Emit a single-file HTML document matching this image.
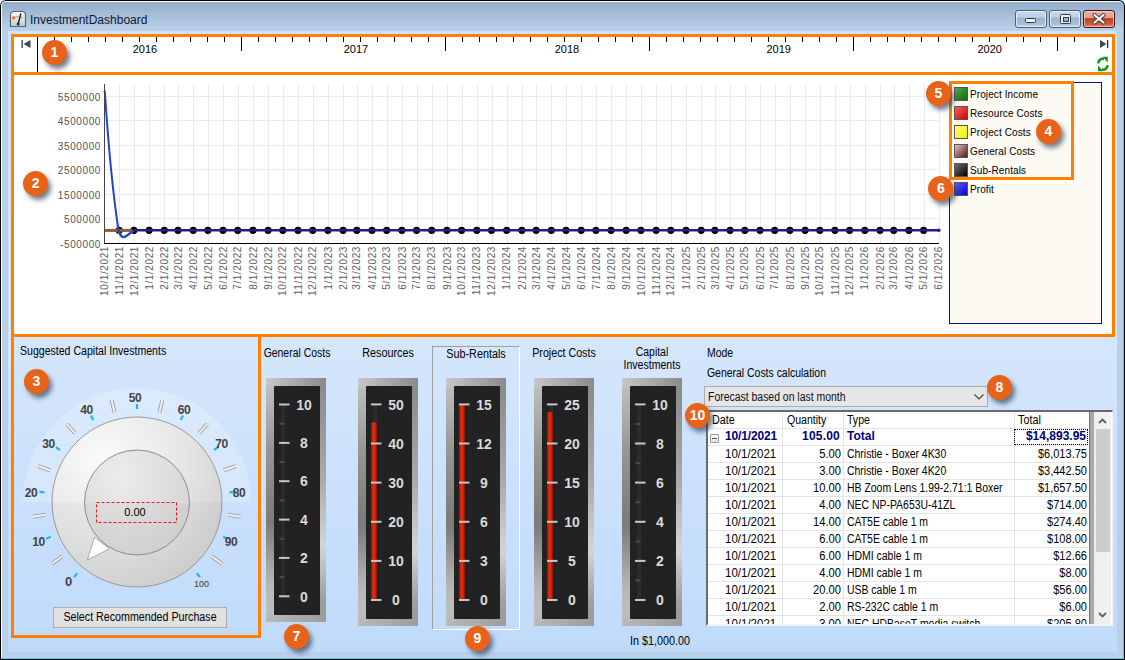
<!DOCTYPE html>
<html><head><meta charset="utf-8">
<style>
*{box-sizing:border-box}
html,body{margin:0;padding:0;width:1125px;height:660px;overflow:hidden;background:#fff;font-family:"Liberation Sans", sans-serif}
.a{position:absolute}
svg text{font-family:"Liberation Sans", sans-serif}
.badge{position:absolute;width:25px;height:25px;border-radius:50%;background:#e8621a;color:#fff;font:bold 14px "Liberation Sans", sans-serif;text-align:center;line-height:25px;box-shadow:3px 4px 5px rgba(40,55,80,0.65)}
.ui{font-size:11px;color:#000;white-space:nowrap}
.tr{font-size:12px;line-height:14px}
.gframe{background:linear-gradient(to right,#c8c8c8,#8a8a8a) top/100% 8px no-repeat,linear-gradient(to right,#bababa,#9c9c9c) bottom/100% 8px no-repeat,linear-gradient(#c4c4c4 0%,#959595 30%,#7a7a7a 59%,#b8b8b8 85%,#c0c0c0 100%) left/8px 100% no-repeat,linear-gradient(#888 0%,#a8a8a8 40%,#d4d4d4 69%,#a0a0a0 90%,#959595 100%) right/8px 100% no-repeat,#a0a0a0}
</style></head><body>
<div class="a" style="left:0;top:0;width:1125px;height:660px;background:#000;border-radius:6px 6px 0 0"></div>
<div class="a" style="left:1px;top:1px;width:1123px;height:658px;background:#3ad6f2;border-radius:5px 5px 0 0"></div>
<div class="a" style="left:1px;top:1px;width:1122px;height:657px;background:#fbfdff;border-radius:5px 5px 0 0"></div>
<div class="a" style="left:2px;top:2px;width:1121px;height:656px;background:#b9d0ea;border-radius:4px 4px 0 0;overflow:hidden">
  <div class="a" style="left:0;top:0;width:1121px;height:29px;background:linear-gradient(#92acca,#bcd2ea)"></div>
</div>
<div class="a" style="left:2px;top:657px;width:1121px;height:1px;background:#c8d0e8"></div>
<!-- client -->
<div class="a" style="left:8px;top:31px;width:1109px;height:621px;background:linear-gradient(#cfe3fb 0px,#d4e6fc 320px,#c0dafa 621px)"></div>
<!-- title -->
<div class="a ui" style="left:30px;top:13px;font-size:12px;color:#101830">InvestmentDashboard</div>
<!-- orange boxes -->
<div class="a" style="left:11px;top:34px;width:1104px;height:41px;border:3px solid #ff7f00;background:#fff"></div>
<div class="a" style="left:11px;top:72px;width:1104px;height:265px;border:3px solid #ff7f00;background:#fff"></div>
<div class="a" style="left:11px;top:334px;width:250px;height:304px;border:3px solid #ff7f00;border-top:none"></div>
<svg class="a" style="left:0;top:0" width="1125" height="660">
<line x1="37.5" y1="37" x2="37.5" y2="72" stroke="#000" stroke-width="1"/>
<line x1="54.5" y1="37" x2="54.5" y2="42" stroke="#000" stroke-width="1"/>
<line x1="71.5" y1="37" x2="71.5" y2="42" stroke="#000" stroke-width="1"/>
<line x1="88.5" y1="37" x2="88.5" y2="42" stroke="#000" stroke-width="1"/>
<line x1="105.5" y1="37" x2="105.5" y2="42" stroke="#000" stroke-width="1"/>
<line x1="122.5" y1="37" x2="122.5" y2="42" stroke="#000" stroke-width="1"/>
<line x1="139.5" y1="37" x2="139.5" y2="42" stroke="#000" stroke-width="1"/>
<line x1="156.5" y1="37" x2="156.5" y2="42" stroke="#000" stroke-width="1"/>
<line x1="173.5" y1="37" x2="173.5" y2="42" stroke="#000" stroke-width="1"/>
<line x1="190.5" y1="37" x2="190.5" y2="42" stroke="#000" stroke-width="1"/>
<line x1="207.5" y1="37" x2="207.5" y2="42" stroke="#000" stroke-width="1"/>
<line x1="224.5" y1="37" x2="224.5" y2="42" stroke="#000" stroke-width="1"/>
<line x1="241.5" y1="37" x2="241.5" y2="51" stroke="#000" stroke-width="1"/>
<line x1="258.5" y1="37" x2="258.5" y2="42" stroke="#000" stroke-width="1"/>
<line x1="275.5" y1="37" x2="275.5" y2="42" stroke="#000" stroke-width="1"/>
<line x1="292.5" y1="37" x2="292.5" y2="42" stroke="#000" stroke-width="1"/>
<line x1="309.5" y1="37" x2="309.5" y2="42" stroke="#000" stroke-width="1"/>
<line x1="326.5" y1="37" x2="326.5" y2="42" stroke="#000" stroke-width="1"/>
<line x1="343.5" y1="37" x2="343.5" y2="42" stroke="#000" stroke-width="1"/>
<line x1="360.5" y1="37" x2="360.5" y2="42" stroke="#000" stroke-width="1"/>
<line x1="377.5" y1="37" x2="377.5" y2="42" stroke="#000" stroke-width="1"/>
<line x1="394.5" y1="37" x2="394.5" y2="42" stroke="#000" stroke-width="1"/>
<line x1="411.5" y1="37" x2="411.5" y2="42" stroke="#000" stroke-width="1"/>
<line x1="428.5" y1="37" x2="428.5" y2="42" stroke="#000" stroke-width="1"/>
<line x1="445.5" y1="37" x2="445.5" y2="51" stroke="#000" stroke-width="1"/>
<line x1="462.5" y1="37" x2="462.5" y2="42" stroke="#000" stroke-width="1"/>
<line x1="479.5" y1="37" x2="479.5" y2="42" stroke="#000" stroke-width="1"/>
<line x1="496.5" y1="37" x2="496.5" y2="42" stroke="#000" stroke-width="1"/>
<line x1="513.5" y1="37" x2="513.5" y2="42" stroke="#000" stroke-width="1"/>
<line x1="530.5" y1="37" x2="530.5" y2="42" stroke="#000" stroke-width="1"/>
<line x1="547.5" y1="37" x2="547.5" y2="42" stroke="#000" stroke-width="1"/>
<line x1="564.5" y1="37" x2="564.5" y2="42" stroke="#000" stroke-width="1"/>
<line x1="581.5" y1="37" x2="581.5" y2="42" stroke="#000" stroke-width="1"/>
<line x1="598.5" y1="37" x2="598.5" y2="42" stroke="#000" stroke-width="1"/>
<line x1="615.5" y1="37" x2="615.5" y2="42" stroke="#000" stroke-width="1"/>
<line x1="632.5" y1="37" x2="632.5" y2="42" stroke="#000" stroke-width="1"/>
<line x1="649.5" y1="37" x2="649.5" y2="51" stroke="#000" stroke-width="1"/>
<line x1="666.5" y1="37" x2="666.5" y2="42" stroke="#000" stroke-width="1"/>
<line x1="683.5" y1="37" x2="683.5" y2="42" stroke="#000" stroke-width="1"/>
<line x1="700.5" y1="37" x2="700.5" y2="42" stroke="#000" stroke-width="1"/>
<line x1="717.5" y1="37" x2="717.5" y2="42" stroke="#000" stroke-width="1"/>
<line x1="734.5" y1="37" x2="734.5" y2="42" stroke="#000" stroke-width="1"/>
<line x1="751.5" y1="37" x2="751.5" y2="42" stroke="#000" stroke-width="1"/>
<line x1="768.5" y1="37" x2="768.5" y2="42" stroke="#000" stroke-width="1"/>
<line x1="785.5" y1="37" x2="785.5" y2="42" stroke="#000" stroke-width="1"/>
<line x1="802.5" y1="37" x2="802.5" y2="42" stroke="#000" stroke-width="1"/>
<line x1="819.5" y1="37" x2="819.5" y2="42" stroke="#000" stroke-width="1"/>
<line x1="836.5" y1="37" x2="836.5" y2="42" stroke="#000" stroke-width="1"/>
<line x1="853.5" y1="37" x2="853.5" y2="51" stroke="#000" stroke-width="1"/>
<line x1="870.5" y1="37" x2="870.5" y2="42" stroke="#000" stroke-width="1"/>
<line x1="887.5" y1="37" x2="887.5" y2="42" stroke="#000" stroke-width="1"/>
<line x1="904.5" y1="37" x2="904.5" y2="42" stroke="#000" stroke-width="1"/>
<line x1="921.5" y1="37" x2="921.5" y2="42" stroke="#000" stroke-width="1"/>
<line x1="938.5" y1="37" x2="938.5" y2="42" stroke="#000" stroke-width="1"/>
<line x1="955.5" y1="37" x2="955.5" y2="42" stroke="#000" stroke-width="1"/>
<line x1="972.5" y1="37" x2="972.5" y2="42" stroke="#000" stroke-width="1"/>
<line x1="989.5" y1="37" x2="989.5" y2="42" stroke="#000" stroke-width="1"/>
<line x1="1006.5" y1="37" x2="1006.5" y2="42" stroke="#000" stroke-width="1"/>
<line x1="1023.5" y1="37" x2="1023.5" y2="42" stroke="#000" stroke-width="1"/>
<line x1="1040.5" y1="37" x2="1040.5" y2="42" stroke="#000" stroke-width="1"/>
<line x1="1057.5" y1="37" x2="1057.5" y2="51" stroke="#000" stroke-width="1"/>
<line x1="1074.5" y1="37" x2="1074.5" y2="42" stroke="#000" stroke-width="1"/>
<text x="145" y="53" text-anchor="middle" font-size="11" fill="#000">2016</text>
<text x="356" y="53" text-anchor="middle" font-size="11" fill="#000">2017</text>
<text x="567" y="53" text-anchor="middle" font-size="11" fill="#000">2018</text>
<text x="778.7" y="53" text-anchor="middle" font-size="11" fill="#000">2019</text>
<text x="989.7" y="53" text-anchor="middle" font-size="11" fill="#000">2020</text>
<line x1="104" y1="96.5" x2="939" y2="96.5" stroke="#ebebeb" stroke-width="1"/>
<line x1="104" y1="120.5" x2="939" y2="120.5" stroke="#ebebeb" stroke-width="1"/>
<line x1="104" y1="145.5" x2="939" y2="145.5" stroke="#ebebeb" stroke-width="1"/>
<line x1="104" y1="169.5" x2="939" y2="169.5" stroke="#ebebeb" stroke-width="1"/>
<line x1="104" y1="194.5" x2="939" y2="194.5" stroke="#ebebeb" stroke-width="1"/>
<line x1="104" y1="218.5" x2="939" y2="218.5" stroke="#ebebeb" stroke-width="1"/>
<line x1="119.5" y1="84" x2="119.5" y2="243" stroke="#ebebeb" stroke-width="1"/>
<line x1="134.5" y1="84" x2="134.5" y2="243" stroke="#ebebeb" stroke-width="1"/>
<line x1="149.5" y1="84" x2="149.5" y2="243" stroke="#ebebeb" stroke-width="1"/>
<line x1="164.5" y1="84" x2="164.5" y2="243" stroke="#ebebeb" stroke-width="1"/>
<line x1="178.5" y1="84" x2="178.5" y2="243" stroke="#ebebeb" stroke-width="1"/>
<line x1="193.5" y1="84" x2="193.5" y2="243" stroke="#ebebeb" stroke-width="1"/>
<line x1="208.5" y1="84" x2="208.5" y2="243" stroke="#ebebeb" stroke-width="1"/>
<line x1="223.5" y1="84" x2="223.5" y2="243" stroke="#ebebeb" stroke-width="1"/>
<line x1="238.5" y1="84" x2="238.5" y2="243" stroke="#ebebeb" stroke-width="1"/>
<line x1="253.5" y1="84" x2="253.5" y2="243" stroke="#ebebeb" stroke-width="1"/>
<line x1="268.5" y1="84" x2="268.5" y2="243" stroke="#ebebeb" stroke-width="1"/>
<line x1="283.5" y1="84" x2="283.5" y2="243" stroke="#ebebeb" stroke-width="1"/>
<line x1="298.5" y1="84" x2="298.5" y2="243" stroke="#ebebeb" stroke-width="1"/>
<line x1="313.5" y1="84" x2="313.5" y2="243" stroke="#ebebeb" stroke-width="1"/>
<line x1="328.5" y1="84" x2="328.5" y2="243" stroke="#ebebeb" stroke-width="1"/>
<line x1="343.5" y1="84" x2="343.5" y2="243" stroke="#ebebeb" stroke-width="1"/>
<line x1="357.5" y1="84" x2="357.5" y2="243" stroke="#ebebeb" stroke-width="1"/>
<line x1="372.5" y1="84" x2="372.5" y2="243" stroke="#ebebeb" stroke-width="1"/>
<line x1="387.5" y1="84" x2="387.5" y2="243" stroke="#ebebeb" stroke-width="1"/>
<line x1="402.5" y1="84" x2="402.5" y2="243" stroke="#ebebeb" stroke-width="1"/>
<line x1="417.5" y1="84" x2="417.5" y2="243" stroke="#ebebeb" stroke-width="1"/>
<line x1="432.5" y1="84" x2="432.5" y2="243" stroke="#ebebeb" stroke-width="1"/>
<line x1="447.5" y1="84" x2="447.5" y2="243" stroke="#ebebeb" stroke-width="1"/>
<line x1="462.5" y1="84" x2="462.5" y2="243" stroke="#ebebeb" stroke-width="1"/>
<line x1="477.5" y1="84" x2="477.5" y2="243" stroke="#ebebeb" stroke-width="1"/>
<line x1="492.5" y1="84" x2="492.5" y2="243" stroke="#ebebeb" stroke-width="1"/>
<line x1="507.5" y1="84" x2="507.5" y2="243" stroke="#ebebeb" stroke-width="1"/>
<line x1="522.5" y1="84" x2="522.5" y2="243" stroke="#ebebeb" stroke-width="1"/>
<line x1="536.5" y1="84" x2="536.5" y2="243" stroke="#ebebeb" stroke-width="1"/>
<line x1="551.5" y1="84" x2="551.5" y2="243" stroke="#ebebeb" stroke-width="1"/>
<line x1="566.5" y1="84" x2="566.5" y2="243" stroke="#ebebeb" stroke-width="1"/>
<line x1="581.5" y1="84" x2="581.5" y2="243" stroke="#ebebeb" stroke-width="1"/>
<line x1="596.5" y1="84" x2="596.5" y2="243" stroke="#ebebeb" stroke-width="1"/>
<line x1="611.5" y1="84" x2="611.5" y2="243" stroke="#ebebeb" stroke-width="1"/>
<line x1="626.5" y1="84" x2="626.5" y2="243" stroke="#ebebeb" stroke-width="1"/>
<line x1="641.5" y1="84" x2="641.5" y2="243" stroke="#ebebeb" stroke-width="1"/>
<line x1="656.5" y1="84" x2="656.5" y2="243" stroke="#ebebeb" stroke-width="1"/>
<line x1="671.5" y1="84" x2="671.5" y2="243" stroke="#ebebeb" stroke-width="1"/>
<line x1="686.5" y1="84" x2="686.5" y2="243" stroke="#ebebeb" stroke-width="1"/>
<line x1="701.5" y1="84" x2="701.5" y2="243" stroke="#ebebeb" stroke-width="1"/>
<line x1="715.5" y1="84" x2="715.5" y2="243" stroke="#ebebeb" stroke-width="1"/>
<line x1="730.5" y1="84" x2="730.5" y2="243" stroke="#ebebeb" stroke-width="1"/>
<line x1="745.5" y1="84" x2="745.5" y2="243" stroke="#ebebeb" stroke-width="1"/>
<line x1="760.5" y1="84" x2="760.5" y2="243" stroke="#ebebeb" stroke-width="1"/>
<line x1="775.5" y1="84" x2="775.5" y2="243" stroke="#ebebeb" stroke-width="1"/>
<line x1="790.5" y1="84" x2="790.5" y2="243" stroke="#ebebeb" stroke-width="1"/>
<line x1="805.5" y1="84" x2="805.5" y2="243" stroke="#ebebeb" stroke-width="1"/>
<line x1="820.5" y1="84" x2="820.5" y2="243" stroke="#ebebeb" stroke-width="1"/>
<line x1="835.5" y1="84" x2="835.5" y2="243" stroke="#ebebeb" stroke-width="1"/>
<line x1="850.5" y1="84" x2="850.5" y2="243" stroke="#ebebeb" stroke-width="1"/>
<line x1="865.5" y1="84" x2="865.5" y2="243" stroke="#ebebeb" stroke-width="1"/>
<line x1="880.5" y1="84" x2="880.5" y2="243" stroke="#ebebeb" stroke-width="1"/>
<line x1="894.5" y1="84" x2="894.5" y2="243" stroke="#ebebeb" stroke-width="1"/>
<line x1="909.5" y1="84" x2="909.5" y2="243" stroke="#ebebeb" stroke-width="1"/>
<line x1="924.5" y1="84" x2="924.5" y2="243" stroke="#ebebeb" stroke-width="1"/>
<line x1="939.5" y1="84" x2="939.5" y2="243" stroke="#ebebeb" stroke-width="1"/>
<text x="101" y="100.6" text-anchor="end" font-size="10" letter-spacing="0.6" fill="#555">5500000</text>
<text x="101" y="124.6" text-anchor="end" font-size="10" letter-spacing="0.6" fill="#555">4500000</text>
<text x="101" y="149.6" text-anchor="end" font-size="10" letter-spacing="0.6" fill="#555">3500000</text>
<text x="101" y="173.6" text-anchor="end" font-size="10" letter-spacing="0.6" fill="#555">2500000</text>
<text x="101" y="198.6" text-anchor="end" font-size="10" letter-spacing="0.6" fill="#555">1500000</text>
<text x="101" y="222.6" text-anchor="end" font-size="10" letter-spacing="0.6" fill="#555">500000</text>
<text x="101" y="247.6" text-anchor="end" font-size="10" letter-spacing="0.6" fill="#555">-500000</text>
<text transform="translate(107.6,246) rotate(-90)" text-anchor="end" font-size="10" letter-spacing="0.6" fill="#606060">10/1/2021</text>
<text transform="translate(122.8,246) rotate(-90)" text-anchor="end" font-size="10" letter-spacing="0.6" fill="#606060">11/1/2021</text>
<text transform="translate(137.5,246) rotate(-90)" text-anchor="end" font-size="10" letter-spacing="0.6" fill="#606060">12/1/2021</text>
<text transform="translate(152.7,246) rotate(-90)" text-anchor="end" font-size="10" letter-spacing="0.6" fill="#606060">1/1/2022</text>
<text transform="translate(167.9,246) rotate(-90)" text-anchor="end" font-size="10" letter-spacing="0.6" fill="#606060">2/1/2022</text>
<text transform="translate(181.6,246) rotate(-90)" text-anchor="end" font-size="10" letter-spacing="0.6" fill="#606060">3/1/2022</text>
<text transform="translate(196.8,246) rotate(-90)" text-anchor="end" font-size="10" letter-spacing="0.6" fill="#606060">4/1/2022</text>
<text transform="translate(211.5,246) rotate(-90)" text-anchor="end" font-size="10" letter-spacing="0.6" fill="#606060">5/1/2022</text>
<text transform="translate(226.6,246) rotate(-90)" text-anchor="end" font-size="10" letter-spacing="0.6" fill="#606060">6/1/2022</text>
<text transform="translate(241.3,246) rotate(-90)" text-anchor="end" font-size="10" letter-spacing="0.6" fill="#606060">7/1/2022</text>
<text transform="translate(256.5,246) rotate(-90)" text-anchor="end" font-size="10" letter-spacing="0.6" fill="#606060">8/1/2022</text>
<text transform="translate(271.7,246) rotate(-90)" text-anchor="end" font-size="10" letter-spacing="0.6" fill="#606060">9/1/2022</text>
<text transform="translate(286.4,246) rotate(-90)" text-anchor="end" font-size="10" letter-spacing="0.6" fill="#606060">10/1/2022</text>
<text transform="translate(301.6,246) rotate(-90)" text-anchor="end" font-size="10" letter-spacing="0.6" fill="#606060">11/1/2022</text>
<text transform="translate(316.3,246) rotate(-90)" text-anchor="end" font-size="10" letter-spacing="0.6" fill="#606060">12/1/2022</text>
<text transform="translate(331.5,246) rotate(-90)" text-anchor="end" font-size="10" letter-spacing="0.6" fill="#606060">1/1/2023</text>
<text transform="translate(346.7,246) rotate(-90)" text-anchor="end" font-size="10" letter-spacing="0.6" fill="#606060">2/1/2023</text>
<text transform="translate(360.4,246) rotate(-90)" text-anchor="end" font-size="10" letter-spacing="0.6" fill="#606060">3/1/2023</text>
<text transform="translate(375.6,246) rotate(-90)" text-anchor="end" font-size="10" letter-spacing="0.6" fill="#606060">4/1/2023</text>
<text transform="translate(390.3,246) rotate(-90)" text-anchor="end" font-size="10" letter-spacing="0.6" fill="#606060">5/1/2023</text>
<text transform="translate(405.5,246) rotate(-90)" text-anchor="end" font-size="10" letter-spacing="0.6" fill="#606060">6/1/2023</text>
<text transform="translate(420.2,246) rotate(-90)" text-anchor="end" font-size="10" letter-spacing="0.6" fill="#606060">7/1/2023</text>
<text transform="translate(435.3,246) rotate(-90)" text-anchor="end" font-size="10" letter-spacing="0.6" fill="#606060">8/1/2023</text>
<text transform="translate(450.5,246) rotate(-90)" text-anchor="end" font-size="10" letter-spacing="0.6" fill="#606060">9/1/2023</text>
<text transform="translate(465.2,246) rotate(-90)" text-anchor="end" font-size="10" letter-spacing="0.6" fill="#606060">10/1/2023</text>
<text transform="translate(480.4,246) rotate(-90)" text-anchor="end" font-size="10" letter-spacing="0.6" fill="#606060">11/1/2023</text>
<text transform="translate(495.1,246) rotate(-90)" text-anchor="end" font-size="10" letter-spacing="0.6" fill="#606060">12/1/2023</text>
<text transform="translate(510.3,246) rotate(-90)" text-anchor="end" font-size="10" letter-spacing="0.6" fill="#606060">1/1/2024</text>
<text transform="translate(525.5,246) rotate(-90)" text-anchor="end" font-size="10" letter-spacing="0.6" fill="#606060">2/1/2024</text>
<text transform="translate(539.7,246) rotate(-90)" text-anchor="end" font-size="10" letter-spacing="0.6" fill="#606060">3/1/2024</text>
<text transform="translate(554.9,246) rotate(-90)" text-anchor="end" font-size="10" letter-spacing="0.6" fill="#606060">4/1/2024</text>
<text transform="translate(569.6,246) rotate(-90)" text-anchor="end" font-size="10" letter-spacing="0.6" fill="#606060">5/1/2024</text>
<text transform="translate(584.8,246) rotate(-90)" text-anchor="end" font-size="10" letter-spacing="0.6" fill="#606060">6/1/2024</text>
<text transform="translate(599.5,246) rotate(-90)" text-anchor="end" font-size="10" letter-spacing="0.6" fill="#606060">7/1/2024</text>
<text transform="translate(614.7,246) rotate(-90)" text-anchor="end" font-size="10" letter-spacing="0.6" fill="#606060">8/1/2024</text>
<text transform="translate(629.8,246) rotate(-90)" text-anchor="end" font-size="10" letter-spacing="0.6" fill="#606060">9/1/2024</text>
<text transform="translate(644.5,246) rotate(-90)" text-anchor="end" font-size="10" letter-spacing="0.6" fill="#606060">10/1/2024</text>
<text transform="translate(659.7,246) rotate(-90)" text-anchor="end" font-size="10" letter-spacing="0.6" fill="#606060">11/1/2024</text>
<text transform="translate(674.4,246) rotate(-90)" text-anchor="end" font-size="10" letter-spacing="0.6" fill="#606060">12/1/2024</text>
<text transform="translate(689.6,246) rotate(-90)" text-anchor="end" font-size="10" letter-spacing="0.6" fill="#606060">1/1/2025</text>
<text transform="translate(704.8,246) rotate(-90)" text-anchor="end" font-size="10" letter-spacing="0.6" fill="#606060">2/1/2025</text>
<text transform="translate(718.5,246) rotate(-90)" text-anchor="end" font-size="10" letter-spacing="0.6" fill="#606060">3/1/2025</text>
<text transform="translate(733.7,246) rotate(-90)" text-anchor="end" font-size="10" letter-spacing="0.6" fill="#606060">4/1/2025</text>
<text transform="translate(748.4,246) rotate(-90)" text-anchor="end" font-size="10" letter-spacing="0.6" fill="#606060">5/1/2025</text>
<text transform="translate(763.6,246) rotate(-90)" text-anchor="end" font-size="10" letter-spacing="0.6" fill="#606060">6/1/2025</text>
<text transform="translate(778.3,246) rotate(-90)" text-anchor="end" font-size="10" letter-spacing="0.6" fill="#606060">7/1/2025</text>
<text transform="translate(793.5,246) rotate(-90)" text-anchor="end" font-size="10" letter-spacing="0.6" fill="#606060">8/1/2025</text>
<text transform="translate(808.7,246) rotate(-90)" text-anchor="end" font-size="10" letter-spacing="0.6" fill="#606060">9/1/2025</text>
<text transform="translate(823.4,246) rotate(-90)" text-anchor="end" font-size="10" letter-spacing="0.6" fill="#606060">10/1/2025</text>
<text transform="translate(838.5,246) rotate(-90)" text-anchor="end" font-size="10" letter-spacing="0.6" fill="#606060">11/1/2025</text>
<text transform="translate(853.2,246) rotate(-90)" text-anchor="end" font-size="10" letter-spacing="0.6" fill="#606060">12/1/2025</text>
<text transform="translate(868.4,246) rotate(-90)" text-anchor="end" font-size="10" letter-spacing="0.6" fill="#606060">1/1/2026</text>
<text transform="translate(883.6,246) rotate(-90)" text-anchor="end" font-size="10" letter-spacing="0.6" fill="#606060">2/1/2026</text>
<text transform="translate(897.3,246) rotate(-90)" text-anchor="end" font-size="10" letter-spacing="0.6" fill="#606060">3/1/2026</text>
<text transform="translate(912.5,246) rotate(-90)" text-anchor="end" font-size="10" letter-spacing="0.6" fill="#606060">4/1/2026</text>
<text transform="translate(927.2,246) rotate(-90)" text-anchor="end" font-size="10" letter-spacing="0.6" fill="#606060">5/1/2026</text>
<text transform="translate(942.4,246) rotate(-90)" text-anchor="end" font-size="10" letter-spacing="0.6" fill="#606060">6/1/2026</text>
<circle cx="119.2" cy="230.3" r="3.6" fill="#000"/>
<circle cx="133.9" cy="230.3" r="3.6" fill="#000"/>
<circle cx="149.1" cy="230.3" r="3.6" fill="#000"/>
<circle cx="164.3" cy="230.3" r="3.6" fill="#000"/>
<circle cx="178.0" cy="230.3" r="3.6" fill="#000"/>
<circle cx="193.2" cy="230.3" r="3.6" fill="#000"/>
<circle cx="207.9" cy="230.3" r="3.6" fill="#000"/>
<circle cx="223.0" cy="230.3" r="3.6" fill="#000"/>
<circle cx="237.7" cy="230.3" r="3.6" fill="#000"/>
<circle cx="252.9" cy="230.3" r="3.6" fill="#000"/>
<circle cx="268.1" cy="230.3" r="3.6" fill="#000"/>
<circle cx="282.8" cy="230.3" r="3.6" fill="#000"/>
<circle cx="298.0" cy="230.3" r="3.6" fill="#000"/>
<circle cx="312.7" cy="230.3" r="3.6" fill="#000"/>
<circle cx="327.9" cy="230.3" r="3.6" fill="#000"/>
<circle cx="343.1" cy="230.3" r="3.6" fill="#000"/>
<circle cx="356.8" cy="230.3" r="3.6" fill="#000"/>
<circle cx="372.0" cy="230.3" r="3.6" fill="#000"/>
<circle cx="386.7" cy="230.3" r="3.6" fill="#000"/>
<circle cx="401.9" cy="230.3" r="3.6" fill="#000"/>
<circle cx="416.6" cy="230.3" r="3.6" fill="#000"/>
<circle cx="431.7" cy="230.3" r="3.6" fill="#000"/>
<circle cx="446.9" cy="230.3" r="3.6" fill="#000"/>
<circle cx="461.6" cy="230.3" r="3.6" fill="#000"/>
<circle cx="476.8" cy="230.3" r="3.6" fill="#000"/>
<circle cx="491.5" cy="230.3" r="3.6" fill="#000"/>
<circle cx="506.7" cy="230.3" r="3.6" fill="#000"/>
<circle cx="521.9" cy="230.3" r="3.6" fill="#000"/>
<circle cx="536.1" cy="230.3" r="3.6" fill="#000"/>
<circle cx="551.3" cy="230.3" r="3.6" fill="#000"/>
<circle cx="566.0" cy="230.3" r="3.6" fill="#000"/>
<circle cx="581.2" cy="230.3" r="3.6" fill="#000"/>
<circle cx="595.9" cy="230.3" r="3.6" fill="#000"/>
<circle cx="611.1" cy="230.3" r="3.6" fill="#000"/>
<circle cx="626.2" cy="230.3" r="3.6" fill="#000"/>
<circle cx="640.9" cy="230.3" r="3.6" fill="#000"/>
<circle cx="656.1" cy="230.3" r="3.6" fill="#000"/>
<circle cx="670.8" cy="230.3" r="3.6" fill="#000"/>
<circle cx="686.0" cy="230.3" r="3.6" fill="#000"/>
<circle cx="701.2" cy="230.3" r="3.6" fill="#000"/>
<circle cx="714.9" cy="230.3" r="3.6" fill="#000"/>
<circle cx="730.1" cy="230.3" r="3.6" fill="#000"/>
<circle cx="744.8" cy="230.3" r="3.6" fill="#000"/>
<circle cx="760.0" cy="230.3" r="3.6" fill="#000"/>
<circle cx="774.7" cy="230.3" r="3.6" fill="#000"/>
<circle cx="789.9" cy="230.3" r="3.6" fill="#000"/>
<circle cx="805.1" cy="230.3" r="3.6" fill="#000"/>
<circle cx="819.8" cy="230.3" r="3.6" fill="#000"/>
<circle cx="834.9" cy="230.3" r="3.6" fill="#000"/>
<circle cx="849.6" cy="230.3" r="3.6" fill="#000"/>
<circle cx="864.8" cy="230.3" r="3.6" fill="#000"/>
<circle cx="880.0" cy="230.3" r="3.6" fill="#000"/>
<circle cx="893.7" cy="230.3" r="3.6" fill="#000"/>
<circle cx="908.9" cy="230.3" r="3.6" fill="#000"/>
<circle cx="923.6" cy="230.3" r="3.6" fill="#000"/>
<polyline points="104.0,230.3 938.8,230.3" stroke="#241c8a" stroke-width="2.4" fill="none"/>
<line x1="104" y1="230.3" x2="132" y2="230.3" stroke="#9a5a2c" stroke-width="2.8"/>
<path d="M118.5,232 C120.5,237 123,238.5 126,236.5 C129,234.5 131,232 133.3,231" stroke="#3aa040" stroke-width="2" fill="none"/>
<path d="M104.8,91 C108,140 114,200 118,227 C119.5,235 122,237.5 124.5,236.8 C128,235.5 130.5,232.5 133.3,230.8" stroke="#1f44d0" stroke-width="2" fill="none"/>
<circle cx="104.8" cy="91.5" r="1.2" fill="#3a9a3a"/>
<circle cx="938.8" cy="230.3" r="1.8" fill="#241c8a"/>
<line x1="104.5" y1="84" x2="104.5" y2="243" stroke="#444" stroke-width="1"/>
<line x1="104" y1="243.5" x2="939" y2="243.5" stroke="#000" stroke-width="1"/>
</svg>
<!-- legend -->
<div class="a" style="left:949px;top:82px;width:153px;height:242px;background:#fdfaf3;border:1px solid #10107a"></div>
<div class="a" style="left:949px;top:81px;width:125px;height:99px;border:3px solid #ff7f00"></div>

<div class="a" style="left:954px;top:87px;width:14px;height:14px;background:linear-gradient(135deg,#4db04d,#116611);border:1px solid #555"></div>
<div class="a ui" style="left:970px;top:88px;font-size:10px;line-height:14px;letter-spacing:0.1px">Project Income</div>
<div class="a" style="left:954px;top:106px;width:14px;height:14px;background:linear-gradient(135deg,#ff6060,#cc0000);border:1px solid #555"></div>
<div class="a ui" style="left:970px;top:107px;font-size:10px;line-height:14px;letter-spacing:0.1px">Resource Costs</div>
<div class="a" style="left:954px;top:125px;width:14px;height:14px;background:linear-gradient(135deg,#ffff80,#f0f000);border:1px solid #555"></div>
<div class="a ui" style="left:970px;top:126px;font-size:10px;line-height:14px;letter-spacing:0.1px">Project Costs</div>
<div class="a" style="left:954px;top:144px;width:14px;height:14px;background:linear-gradient(135deg,#e8c0c8,#501820);border:1px solid #555"></div>
<div class="a ui" style="left:970px;top:145px;font-size:10px;line-height:14px;letter-spacing:0.1px">General Costs</div>
<div class="a" style="left:954px;top:163px;width:14px;height:14px;background:linear-gradient(135deg,#707070,#000);border:1px solid #555"></div>
<div class="a ui" style="left:970px;top:164px;font-size:10px;line-height:14px;letter-spacing:0.1px">Sub-Rentals</div>
<div class="a" style="left:954px;top:182px;width:14px;height:14px;background:linear-gradient(135deg,#6060ff,#0000cc);border:1px solid #555"></div>
<div class="a ui" style="left:970px;top:183px;font-size:10px;line-height:14px;letter-spacing:0.1px">Profit</div>
<svg class="a" style="left:0;top:0" width="1125" height="660"><defs><radialGradient id="knob" cx="30%" cy="25%" r="85%"><stop offset="0" stop-color="#fbfbfb"/><stop offset="0.55" stop-color="#e6e6e6"/><stop offset="1" stop-color="#cfcfcf"/></radialGradient><radialGradient id="knob2" cx="35%" cy="25%" r="85%"><stop offset="0" stop-color="#ececec"/><stop offset="1" stop-color="#d2d2d2"/></radialGradient><linearGradient id="shade" x1="0" y1="0" x2="0" y2="1"><stop offset="0" stop-color="#000" stop-opacity="0"/><stop offset="0.5" stop-color="#000" stop-opacity="0"/><stop offset="0.5" stop-color="#000" stop-opacity="0.03"/><stop offset="1" stop-color="#000" stop-opacity="0.02"/></linearGradient></defs><path d="M23.0,502.0 A114,114 0 0 1 251.0,502.0 Z" fill="#ffffff" fill-opacity="0.22"/><line x1="62.2" y1="556.4" x2="52.1" y2="563.7" stroke="#979797" stroke-width="3.8" stroke-linecap="butt"/><line x1="62.2" y1="556.4" x2="52.1" y2="563.7" stroke="#ededed" stroke-width="2.2" stroke-linecap="butt"/><line x1="45.4" y1="514.9" x2="33.0" y2="516.6" stroke="#979797" stroke-width="3.8" stroke-linecap="butt"/><line x1="45.4" y1="514.9" x2="33.0" y2="516.6" stroke="#ededed" stroke-width="2.2" stroke-linecap="butt"/><line x1="50.1" y1="470.4" x2="38.3" y2="466.1" stroke="#979797" stroke-width="3.8" stroke-linecap="butt"/><line x1="50.1" y1="470.4" x2="38.3" y2="466.1" stroke="#ededed" stroke-width="2.2" stroke-linecap="butt"/><line x1="75.1" y1="433.3" x2="66.7" y2="424.0" stroke="#979797" stroke-width="3.8" stroke-linecap="butt"/><line x1="75.1" y1="433.3" x2="66.7" y2="424.0" stroke="#ededed" stroke-width="2.2" stroke-linecap="butt"/><line x1="114.6" y1="412.2" x2="111.6" y2="400.1" stroke="#979797" stroke-width="3.8" stroke-linecap="butt"/><line x1="114.6" y1="412.2" x2="111.6" y2="400.1" stroke="#ededed" stroke-width="2.2" stroke-linecap="butt"/><line x1="159.4" y1="412.2" x2="162.4" y2="400.1" stroke="#979797" stroke-width="3.8" stroke-linecap="butt"/><line x1="159.4" y1="412.2" x2="162.4" y2="400.1" stroke="#ededed" stroke-width="2.2" stroke-linecap="butt"/><line x1="198.9" y1="433.3" x2="207.3" y2="424.0" stroke="#979797" stroke-width="3.8" stroke-linecap="butt"/><line x1="198.9" y1="433.3" x2="207.3" y2="424.0" stroke="#ededed" stroke-width="2.2" stroke-linecap="butt"/><line x1="223.9" y1="470.4" x2="235.7" y2="466.1" stroke="#979797" stroke-width="3.8" stroke-linecap="butt"/><line x1="223.9" y1="470.4" x2="235.7" y2="466.1" stroke="#ededed" stroke-width="2.2" stroke-linecap="butt"/><line x1="228.6" y1="514.9" x2="241.0" y2="516.6" stroke="#979797" stroke-width="3.8" stroke-linecap="butt"/><line x1="228.6" y1="514.9" x2="241.0" y2="516.6" stroke="#ededed" stroke-width="2.2" stroke-linecap="butt"/><line x1="211.8" y1="556.4" x2="221.9" y2="563.7" stroke="#979797" stroke-width="3.8" stroke-linecap="butt"/><line x1="211.8" y1="556.4" x2="221.9" y2="563.7" stroke="#ededed" stroke-width="2.2" stroke-linecap="butt"/><line x1="77.2" y1="573.2" x2="74.0" y2="577.1" stroke="#1ab8f0" stroke-width="2.2"/><line x1="50.8" y1="536.8" x2="46.1" y2="538.7" stroke="#1ab8f0" stroke-width="2.2"/><line x1="44.5" y1="492.3" x2="39.5" y2="491.8" stroke="#1ab8f0" stroke-width="2.2"/><line x1="59.9" y1="450.0" x2="55.8" y2="447.2" stroke="#1ab8f0" stroke-width="2.2"/><line x1="93.3" y1="419.9" x2="91.0" y2="415.5" stroke="#1ab8f0" stroke-width="2.2"/><line x1="137.0" y1="409.0" x2="137.0" y2="404.0" stroke="#1ab8f0" stroke-width="2.2"/><line x1="180.7" y1="419.9" x2="183.0" y2="415.5" stroke="#1ab8f0" stroke-width="2.2"/><line x1="214.1" y1="450.0" x2="218.2" y2="447.2" stroke="#1ab8f0" stroke-width="2.2"/><line x1="229.5" y1="492.3" x2="234.5" y2="491.8" stroke="#1ab8f0" stroke-width="2.2"/><line x1="223.2" y1="536.8" x2="227.9" y2="538.7" stroke="#1ab8f0" stroke-width="2.2"/><line x1="196.8" y1="573.2" x2="200.0" y2="577.1" stroke="#1ab8f0" stroke-width="2.2"/><text x="68.5" y="585.9" text-anchor="middle" font-size="13" font-weight="bold" fill="#444" letter-spacing="-0.3">0</text><text x="38.5" y="545.9" text-anchor="middle" font-size="12" font-weight="bold" fill="#444" letter-spacing="-0.3">10</text><text x="31" y="496.9" text-anchor="middle" font-size="12" font-weight="bold" fill="#444" letter-spacing="-0.3">20</text><text x="48.5" y="448.4" text-anchor="middle" font-size="12" font-weight="bold" fill="#444" letter-spacing="-0.3">30</text><text x="86.5" y="414.4" text-anchor="middle" font-size="12" font-weight="bold" fill="#444" letter-spacing="-0.3">40</text><text x="135" y="401.9" text-anchor="middle" font-size="12" font-weight="bold" fill="#444" letter-spacing="-0.3">50</text><text x="184" y="414.4" text-anchor="middle" font-size="12" font-weight="bold" fill="#444" letter-spacing="-0.3">60</text><text x="221.5" y="448.4" text-anchor="middle" font-size="12" font-weight="bold" fill="#444" letter-spacing="-0.3">70</text><text x="239" y="496.9" text-anchor="middle" font-size="12" font-weight="bold" fill="#444" letter-spacing="-0.3">80</text><text x="231" y="545.9" text-anchor="middle" font-size="12" font-weight="bold" fill="#444" letter-spacing="-0.3">90</text><text x="201.5" y="587.0" text-anchor="middle" font-size="9" fill="#404040">100</text><circle cx="137.0" cy="502.0" r="85" fill="url(#knob)" stroke="#9a9a9a" stroke-width="1"/><circle cx="137.0" cy="502.0" r="85" fill="url(#shade)"/><circle cx="137.0" cy="502.5" r="52.5" fill="url(#knob2)" stroke="#8e8e8e" stroke-width="1"/><circle cx="137.0" cy="502.5" r="52.5" fill="url(#shade)"/><path d="M87.3,560 L94.5,537.3 L109.5,548.7 Z" fill="#fff" stroke="#9a9a9a" stroke-width="0.8"/><rect x="96.5" y="502.5" width="80" height="20" fill="none" stroke="#ff1010" stroke-width="1" stroke-dasharray="3,2"/><text x="135" y="516" text-anchor="middle" font-size="11" fill="#000">0.00</text></svg>
<div class="a ui tr" style="left:19.5px;top:344.4px;transform:scaleX(0.88);transform-origin:0 0">Suggested Capital Investments</div>
<div class="a" style="left:53px;top:607px;width:174px;height:21px;background:#e1e1e1;border:1px solid #adadad"></div>
<div class="a ui tr" style="left:40px;top:609.6px;width:200px;text-align:center;transform:scaleX(0.89)">Select Recommended Purchase</div>
<div class="a gframe" style="left:266px;top:378px;width:60px;height:244px"></div>
<div class="a" style="left:273.5px;top:385.5px;width:46px;height:229.5px;background:#222;border-radius:1px"></div>
<svg class="a" style="left:0;top:0" width="1125" height="660"><rect x="281" y="404.5" width="4" height="191.79999999999995" fill="#2c2c2c"/><rect x="279.5" y="576.1" width="5" height="2" fill="#4a4a4a" /><rect x="279.5" y="537.8" width="5" height="2" fill="#4a4a4a" /><rect x="279.5" y="499.4" width="5" height="2" fill="#4a4a4a" /><rect x="279.5" y="461.0" width="5" height="2" fill="#4a4a4a" /><rect x="279.5" y="422.7" width="5" height="2" fill="#4a4a4a" /><rect x="279" y="595.3" width="10.5" height="2" fill="#c8c8c8"/><text x="304" y="601.5" text-anchor="middle" font-size="14" font-weight="bold" fill="#dadada">0</text><rect x="279" y="556.9" width="10.5" height="2" fill="#c8c8c8"/><text x="304" y="563.1" text-anchor="middle" font-size="14" font-weight="bold" fill="#dadada">2</text><rect x="279" y="518.6" width="10.5" height="2" fill="#c8c8c8"/><text x="304" y="524.8" text-anchor="middle" font-size="14" font-weight="bold" fill="#dadada">4</text><rect x="279" y="480.2" width="10.5" height="2" fill="#c8c8c8"/><text x="304" y="486.4" text-anchor="middle" font-size="14" font-weight="bold" fill="#dadada">6</text><rect x="279" y="441.9" width="10.5" height="2" fill="#c8c8c8"/><text x="304" y="448.1" text-anchor="middle" font-size="14" font-weight="bold" fill="#dadada">8</text><rect x="279" y="403.5" width="10.5" height="2" fill="#c8c8c8"/><text x="304" y="409.7" text-anchor="middle" font-size="14" font-weight="bold" fill="#dadada">10</text></svg>
<div class="a gframe" style="left:358px;top:378px;width:60px;height:248px"></div>
<div class="a" style="left:365.5px;top:385.5px;width:46px;height:233.5px;background:#222;border-radius:1px"></div>
<svg class="a" style="left:0;top:0" width="1125" height="660"><rect x="373" y="404.4" width="4" height="195.60000000000002" fill="#2c2c2c"/><rect x="371.5" y="579.4" width="5" height="2" fill="#4a4a4a" /><rect x="371.5" y="540.3" width="5" height="2" fill="#4a4a4a" /><rect x="371.5" y="501.2" width="5" height="2" fill="#4a4a4a" /><rect x="371.5" y="462.1" width="5" height="2" fill="#4a4a4a" /><rect x="371.5" y="423.0" width="5" height="2" fill="#4a4a4a" /><rect x="371.2" y="422.4" width="5.6" height="177.6" fill="url(#redbar)"/><rect x="371" y="599.0" width="10.5" height="2" fill="#c8c8c8"/><text x="396" y="605.2" text-anchor="middle" font-size="14" font-weight="bold" fill="#dadada">0</text><rect x="371" y="559.9" width="10.5" height="2" fill="#c8c8c8"/><text x="396" y="566.1" text-anchor="middle" font-size="14" font-weight="bold" fill="#dadada">10</text><rect x="371" y="520.8" width="10.5" height="2" fill="#c8c8c8"/><text x="396" y="527.0" text-anchor="middle" font-size="14" font-weight="bold" fill="#dadada">20</text><rect x="371" y="481.6" width="10.5" height="2" fill="#c8c8c8"/><text x="396" y="487.8" text-anchor="middle" font-size="14" font-weight="bold" fill="#dadada">30</text><rect x="371" y="442.5" width="10.5" height="2" fill="#c8c8c8"/><text x="396" y="448.7" text-anchor="middle" font-size="14" font-weight="bold" fill="#dadada">40</text><rect x="371" y="403.4" width="10.5" height="2" fill="#c8c8c8"/><text x="396" y="409.6" text-anchor="middle" font-size="14" font-weight="bold" fill="#dadada">50</text></svg>
<div class="a gframe" style="left:446px;top:378px;width:60px;height:248px"></div>
<div class="a" style="left:453.5px;top:385.5px;width:46px;height:233.5px;background:#222;border-radius:1px"></div>
<svg class="a" style="left:0;top:0" width="1125" height="660"><rect x="461" y="404.4" width="4" height="195.60000000000002" fill="#2c2c2c"/><rect x="459.5" y="579.4" width="5" height="2" fill="#4a4a4a" /><rect x="459.5" y="540.3" width="5" height="2" fill="#4a4a4a" /><rect x="459.5" y="501.2" width="5" height="2" fill="#4a4a4a" /><rect x="459.5" y="462.1" width="5" height="2" fill="#4a4a4a" /><rect x="459.5" y="423.0" width="5" height="2" fill="#4a4a4a" /><rect x="459.2" y="404.4" width="5.6" height="195.6" fill="url(#redbar)"/><rect x="459" y="599.0" width="10.5" height="2" fill="#c8c8c8"/><text x="484" y="605.2" text-anchor="middle" font-size="14" font-weight="bold" fill="#dadada">0</text><rect x="459" y="559.9" width="10.5" height="2" fill="#c8c8c8"/><text x="484" y="566.1" text-anchor="middle" font-size="14" font-weight="bold" fill="#dadada">3</text><rect x="459" y="520.8" width="10.5" height="2" fill="#c8c8c8"/><text x="484" y="527.0" text-anchor="middle" font-size="14" font-weight="bold" fill="#dadada">6</text><rect x="459" y="481.6" width="10.5" height="2" fill="#c8c8c8"/><text x="484" y="487.8" text-anchor="middle" font-size="14" font-weight="bold" fill="#dadada">9</text><rect x="459" y="442.5" width="10.5" height="2" fill="#c8c8c8"/><text x="484" y="448.7" text-anchor="middle" font-size="14" font-weight="bold" fill="#dadada">12</text><rect x="459" y="403.4" width="10.5" height="2" fill="#c8c8c8"/><text x="484" y="409.6" text-anchor="middle" font-size="14" font-weight="bold" fill="#dadada">15</text></svg>
<div class="a gframe" style="left:534px;top:378px;width:60px;height:248px"></div>
<div class="a" style="left:541.5px;top:385.5px;width:46px;height:233.5px;background:#222;border-radius:1px"></div>
<svg class="a" style="left:0;top:0" width="1125" height="660"><rect x="549" y="404.4" width="4" height="195.60000000000002" fill="#2c2c2c"/><rect x="547.5" y="579.4" width="5" height="2" fill="#4a4a4a" /><rect x="547.5" y="540.3" width="5" height="2" fill="#4a4a4a" /><rect x="547.5" y="501.2" width="5" height="2" fill="#4a4a4a" /><rect x="547.5" y="462.1" width="5" height="2" fill="#4a4a4a" /><rect x="547.5" y="423.0" width="5" height="2" fill="#4a4a4a" /><rect x="547.2" y="412.2" width="5.6" height="187.8" fill="url(#redbar)"/><rect x="547" y="599.0" width="10.5" height="2" fill="#c8c8c8"/><text x="572" y="605.2" text-anchor="middle" font-size="14" font-weight="bold" fill="#dadada">0</text><rect x="547" y="559.9" width="10.5" height="2" fill="#c8c8c8"/><text x="572" y="566.1" text-anchor="middle" font-size="14" font-weight="bold" fill="#dadada">5</text><rect x="547" y="520.8" width="10.5" height="2" fill="#c8c8c8"/><text x="572" y="527.0" text-anchor="middle" font-size="14" font-weight="bold" fill="#dadada">10</text><rect x="547" y="481.6" width="10.5" height="2" fill="#c8c8c8"/><text x="572" y="487.8" text-anchor="middle" font-size="14" font-weight="bold" fill="#dadada">15</text><rect x="547" y="442.5" width="10.5" height="2" fill="#c8c8c8"/><text x="572" y="448.7" text-anchor="middle" font-size="14" font-weight="bold" fill="#dadada">20</text><rect x="547" y="403.4" width="10.5" height="2" fill="#c8c8c8"/><text x="572" y="409.6" text-anchor="middle" font-size="14" font-weight="bold" fill="#dadada">25</text></svg>
<div class="a gframe" style="left:622px;top:378px;width:60px;height:248px"></div>
<div class="a" style="left:629.5px;top:385.5px;width:46px;height:233.5px;background:#222;border-radius:1px"></div>
<svg class="a" style="left:0;top:0" width="1125" height="660"><rect x="637" y="404.4" width="4" height="195.60000000000002" fill="#2c2c2c"/><rect x="635.5" y="579.4" width="5" height="2" fill="#4a4a4a" /><rect x="635.5" y="540.3" width="5" height="2" fill="#4a4a4a" /><rect x="635.5" y="501.2" width="5" height="2" fill="#4a4a4a" /><rect x="635.5" y="462.1" width="5" height="2" fill="#4a4a4a" /><rect x="635.5" y="423.0" width="5" height="2" fill="#4a4a4a" /><rect x="635" y="599.0" width="10.5" height="2" fill="#c8c8c8"/><text x="660" y="605.2" text-anchor="middle" font-size="14" font-weight="bold" fill="#dadada">0</text><rect x="635" y="559.9" width="10.5" height="2" fill="#c8c8c8"/><text x="660" y="566.1" text-anchor="middle" font-size="14" font-weight="bold" fill="#dadada">2</text><rect x="635" y="520.8" width="10.5" height="2" fill="#c8c8c8"/><text x="660" y="527.0" text-anchor="middle" font-size="14" font-weight="bold" fill="#dadada">4</text><rect x="635" y="481.6" width="10.5" height="2" fill="#c8c8c8"/><text x="660" y="487.8" text-anchor="middle" font-size="14" font-weight="bold" fill="#dadada">6</text><rect x="635" y="442.5" width="10.5" height="2" fill="#c8c8c8"/><text x="660" y="448.7" text-anchor="middle" font-size="14" font-weight="bold" fill="#dadada">8</text><rect x="635" y="403.4" width="10.5" height="2" fill="#c8c8c8"/><text x="660" y="409.6" text-anchor="middle" font-size="14" font-weight="bold" fill="#dadada">10</text></svg>
<svg class="a" style="left:0;top:0" width="0" height="0"><defs><linearGradient id="redbar" x1="0" x2="1"><stop offset="0" stop-color="#b81800"/><stop offset="0.5" stop-color="#e83010"/><stop offset="1" stop-color="#a01000"/></linearGradient></defs></svg>
<div class="a" style="left:432px;top:346px;width:88px;height:284px;border:1px solid #a0a0a0;border-right-color:#fff;border-bottom-color:#fff"></div>
<div class="a ui tr" style="left:236.5px;top:345.6px;width:120px;text-align:center;transform:scaleX(0.87)">General Costs</div>
<div class="a ui tr" style="left:328px;top:346.0px;width:120px;text-align:center;transform:scaleX(0.9)">Resources</div>
<div class="a ui tr" style="left:416.4px;top:347.40000000000003px;width:120px;text-align:center;transform:scaleX(0.9)">Sub-Rentals</div>
<div class="a ui tr" style="left:504.4px;top:346.40000000000003px;width:120px;text-align:center;transform:scaleX(0.89)">Project Costs</div>
<div class="a ui tr" style="left:592.4px;top:345.3px;width:120px;text-align:center;transform:scaleX(0.87)">Capital</div>
<div class="a ui tr" style="left:591.7px;top:358.40000000000003px;width:120px;text-align:center;transform:scaleX(0.88)">Investments</div>
<div class="a ui tr" style="left:600.3px;top:634.3000000000001px;width:120px;text-align:center;transform:scaleX(0.9)">In $1,000.00</div>
<div class="a ui tr" style="left:707px;top:345.8px;transform:scaleX(0.87);transform-origin:0 0">Mode</div>
<div class="a ui tr" style="left:707px;top:365.8px;transform:scaleX(0.87);transform-origin:0 0">General Costs calculation</div>
<div class="a" style="left:704px;top:386px;width:284px;height:21px;background:#e6e6e6;border:1px solid #acacac"></div>
<div class="a ui tr" style="left:708px;top:389.6px;transform:scaleX(0.87);transform-origin:0 0;color:#101020">Forecast based on last month</div>
<svg class="a" style="left:973px;top:393px" width="12" height="8"><path d="M1.5,1.5 L6,6 L10.5,1.5" stroke="#444" stroke-width="1.2" fill="none"/></svg>
<div class="a" style="left:706px;top:410px;width:407px;height:216px;background:#fff;border-top:2px solid #6a6a6a;border-left:2px solid #6a6a6a;border-right:1px solid #f4f4f4;border-bottom:2px solid #f4f4f4"></div>
<div class="a" style="left:0;top:0;width:1125px;height:624px;overflow:hidden;clip-path:inset(412px 0 0 0)"><div class="a" style="left:782px;top:412px;width:1px;height:212px;background:#e4e4e4"></div><div class="a" style="left:843px;top:412px;width:1px;height:212px;background:#e4e4e4"></div><div class="a" style="left:1014px;top:412px;width:1px;height:212px;background:#e4e4e4"></div><div class="a" style="left:708px;top:428px;width:381px;height:1px;background:#e4e4e4"></div><div class="a" style="left:708px;top:445px;width:381px;height:1px;background:#e4e4e4"></div><div class="a" style="left:708px;top:462px;width:381px;height:1px;background:#e4e4e4"></div><div class="a" style="left:708px;top:479px;width:381px;height:1px;background:#e4e4e4"></div><div class="a" style="left:708px;top:496px;width:381px;height:1px;background:#e4e4e4"></div><div class="a" style="left:708px;top:513px;width:381px;height:1px;background:#e4e4e4"></div><div class="a" style="left:708px;top:530px;width:381px;height:1px;background:#e4e4e4"></div><div class="a" style="left:708px;top:547px;width:381px;height:1px;background:#e4e4e4"></div><div class="a" style="left:708px;top:564px;width:381px;height:1px;background:#e4e4e4"></div><div class="a" style="left:708px;top:581px;width:381px;height:1px;background:#e4e4e4"></div><div class="a" style="left:708px;top:598px;width:381px;height:1px;background:#e4e4e4"></div><div class="a" style="left:708px;top:615px;width:381px;height:1px;background:#e4e4e4"></div><div class="a ui tr" style="left:711.5px;top:412.7px;transform:scaleX(0.9);transform-origin:0 0">Date</div><div class="a ui tr" style="left:786.5px;top:412.7px;transform:scaleX(0.88);transform-origin:0 0">Quantity</div><div class="a ui tr" style="left:847px;top:412.7px;transform:scaleX(0.88);transform-origin:0 0">Type</div><div class="a ui tr" style="left:1018px;top:412.7px;transform:scaleX(0.9);transform-origin:0 0">Total</div><div class="a" style="left:710px;top:433.5px;width:9px;height:9px;border:1px solid #9a9a9a;background:linear-gradient(#fff,#e0e0e0);border-radius:1px"></div><div class="a" style="left:712px;top:437.5px;width:5px;height:1px;background:#3050a0"></div><div class="a ui" style="left:725px;top:430px;line-height:13px;font-size:12px;font-weight:bold;color:#00007a;letter-spacing:-0.15px">10/1/2021</div><div class="a ui" style="left:743px;top:430px;width:97px;text-align:right;line-height:13px;font-size:12px;font-weight:bold;color:#00007a;letter-spacing:0.2px">105.00</div><div class="a ui" style="left:847px;top:430px;line-height:13px;font-size:12px;font-weight:bold;color:#00007a">Total</div><div class="a" style="left:1014px;top:429px;width:74px;height:16px;border:1px dotted #000"></div><div class="a ui" style="left:985px;top:430px;width:101px;text-align:right;line-height:13px;font-size:12px;font-weight:bold;color:#00007a">$14,893.95</div><div class="a ui tr" style="left:725px;top:446.5px;transform:scaleX(0.96);transform-origin:0 0">10/1/2021</div><div class="a ui tr" style="left:741px;top:446.5px;width:100px;text-align:right;transform:scaleX(0.93);transform-origin:100% 0">5.00</div><div class="a ui tr" style="left:847px;top:446.5px;transform:scaleX(0.87);transform-origin:0 0">Christie - Boxer 4K30</div><div class="a ui tr" style="left:986px;top:446.5px;width:101px;text-align:right;transform:scaleX(0.92);transform-origin:100% 0">$6,013.75</div><div class="a ui tr" style="left:725px;top:463.5px;transform:scaleX(0.96);transform-origin:0 0">10/1/2021</div><div class="a ui tr" style="left:741px;top:463.5px;width:100px;text-align:right;transform:scaleX(0.93);transform-origin:100% 0">3.00</div><div class="a ui tr" style="left:847px;top:463.5px;transform:scaleX(0.87);transform-origin:0 0">Christie - Boxer 4K20</div><div class="a ui tr" style="left:986px;top:463.5px;width:101px;text-align:right;transform:scaleX(0.92);transform-origin:100% 0">$3,442.50</div><div class="a ui tr" style="left:725px;top:480.5px;transform:scaleX(0.96);transform-origin:0 0">10/1/2021</div><div class="a ui tr" style="left:741px;top:480.5px;width:100px;text-align:right;transform:scaleX(0.93);transform-origin:100% 0">10.00</div><div class="a ui tr" style="left:847px;top:480.5px;transform:scaleX(0.87);transform-origin:0 0">HB Zoom Lens 1.99-2.71:1 Boxer</div><div class="a ui tr" style="left:986px;top:480.5px;width:101px;text-align:right;transform:scaleX(0.92);transform-origin:100% 0">$1,657.50</div><div class="a ui tr" style="left:725px;top:497.5px;transform:scaleX(0.96);transform-origin:0 0">10/1/2021</div><div class="a ui tr" style="left:741px;top:497.5px;width:100px;text-align:right;transform:scaleX(0.93);transform-origin:100% 0">4.00</div><div class="a ui tr" style="left:847px;top:497.5px;transform:scaleX(0.87);transform-origin:0 0">NEC NP-PA653U-41ZL</div><div class="a ui tr" style="left:986px;top:497.5px;width:101px;text-align:right;transform:scaleX(0.92);transform-origin:100% 0">$714.00</div><div class="a ui tr" style="left:725px;top:514.5px;transform:scaleX(0.96);transform-origin:0 0">10/1/2021</div><div class="a ui tr" style="left:741px;top:514.5px;width:100px;text-align:right;transform:scaleX(0.93);transform-origin:100% 0">14.00</div><div class="a ui tr" style="left:847px;top:514.5px;transform:scaleX(0.87);transform-origin:0 0">CAT5E cable 1 m</div><div class="a ui tr" style="left:986px;top:514.5px;width:101px;text-align:right;transform:scaleX(0.92);transform-origin:100% 0">$274.40</div><div class="a ui tr" style="left:725px;top:531.5px;transform:scaleX(0.96);transform-origin:0 0">10/1/2021</div><div class="a ui tr" style="left:741px;top:531.5px;width:100px;text-align:right;transform:scaleX(0.93);transform-origin:100% 0">6.00</div><div class="a ui tr" style="left:847px;top:531.5px;transform:scaleX(0.87);transform-origin:0 0">CAT5E cable 1 m</div><div class="a ui tr" style="left:986px;top:531.5px;width:101px;text-align:right;transform:scaleX(0.92);transform-origin:100% 0">$108.00</div><div class="a ui tr" style="left:725px;top:548.5px;transform:scaleX(0.96);transform-origin:0 0">10/1/2021</div><div class="a ui tr" style="left:741px;top:548.5px;width:100px;text-align:right;transform:scaleX(0.93);transform-origin:100% 0">6.00</div><div class="a ui tr" style="left:847px;top:548.5px;transform:scaleX(0.87);transform-origin:0 0">HDMI cable 1 m</div><div class="a ui tr" style="left:986px;top:548.5px;width:101px;text-align:right;transform:scaleX(0.92);transform-origin:100% 0">$12.66</div><div class="a ui tr" style="left:725px;top:565.5px;transform:scaleX(0.96);transform-origin:0 0">10/1/2021</div><div class="a ui tr" style="left:741px;top:565.5px;width:100px;text-align:right;transform:scaleX(0.93);transform-origin:100% 0">4.00</div><div class="a ui tr" style="left:847px;top:565.5px;transform:scaleX(0.87);transform-origin:0 0">HDMI cable 1 m</div><div class="a ui tr" style="left:986px;top:565.5px;width:101px;text-align:right;transform:scaleX(0.92);transform-origin:100% 0">$8.00</div><div class="a ui tr" style="left:725px;top:582.5px;transform:scaleX(0.96);transform-origin:0 0">10/1/2021</div><div class="a ui tr" style="left:741px;top:582.5px;width:100px;text-align:right;transform:scaleX(0.93);transform-origin:100% 0">20.00</div><div class="a ui tr" style="left:847px;top:582.5px;transform:scaleX(0.87);transform-origin:0 0">USB cable 1 m</div><div class="a ui tr" style="left:986px;top:582.5px;width:101px;text-align:right;transform:scaleX(0.92);transform-origin:100% 0">$56.00</div><div class="a ui tr" style="left:725px;top:599.5px;transform:scaleX(0.96);transform-origin:0 0">10/1/2021</div><div class="a ui tr" style="left:741px;top:599.5px;width:100px;text-align:right;transform:scaleX(0.93);transform-origin:100% 0">2.00</div><div class="a ui tr" style="left:847px;top:599.5px;transform:scaleX(0.87);transform-origin:0 0">RS-232C cable 1 m</div><div class="a ui tr" style="left:986px;top:599.5px;width:101px;text-align:right;transform:scaleX(0.92);transform-origin:100% 0">$6.00</div><div class="a ui tr" style="left:725px;top:616.5px;transform:scaleX(0.96);transform-origin:0 0">10/1/2021</div><div class="a ui tr" style="left:741px;top:616.5px;width:100px;text-align:right;transform:scaleX(0.93);transform-origin:100% 0">3.00</div><div class="a ui tr" style="left:847px;top:616.5px;transform:scaleX(0.87);transform-origin:0 0">NEC HDBaseT media switch</div><div class="a ui tr" style="left:986px;top:616.5px;width:101px;text-align:right;transform:scaleX(0.92);transform-origin:100% 0">$205.80</div></div>
<div class="a" style="left:1089px;top:412px;width:1px;height:212px;background:#6e6e6e"></div>
<div class="a" style="left:1090px;top:412px;width:3.5px;height:212px;background:#a9a9a9"></div>
<div class="a" style="left:1093.5px;top:412px;width:17.5px;height:212px;background:#f0f0f0"></div>
<div class="a" style="left:1095.5px;top:429px;width:14.5px;height:123px;background:#cdcdcd"></div>
<svg class="a" style="left:1097px;top:417px" width="12" height="8"><path d="M2,6 L5.5,2.5 L9,6" stroke="#606060" stroke-width="1.8" fill="none"/></svg>
<svg class="a" style="left:1097px;top:611px" width="12" height="8"><path d="M2,2 L5.5,5.5 L9,2" stroke="#606060" stroke-width="1.8" fill="none"/></svg>
<svg class="a" style="left:9px;top:10px" width="19" height="18">
<defs><linearGradient id="icg" x1="0" y1="0" x2="0" y2="1"><stop offset="0" stop-color="#ffffff"/><stop offset="1" stop-color="#c8c8c8"/></linearGradient></defs>
<path d="M1.5,16.5 L1.5,5 Q1.5,2 5,1.5 L13,1.5 Q16.5,2 16.5,5 L16.5,16.5 Z" fill="url(#icg)" stroke="#52657a" stroke-width="1.2"/>
<path d="M4,8 Q9,5 14,8" stroke="#b8b8b8" stroke-width="1.6" fill="none"/>
<circle cx="4.6" cy="7.8" r="1.6" fill="#ff6010"/>
<line x1="11.8" y1="3.5" x2="9.3" y2="13.5" stroke="#0d2a4a" stroke-width="1.4"/>
<circle cx="9.1" cy="14" r="1.5" fill="#0d2a4a"/>
</svg>
<div class="a" style="left:1015px;top:10px;width:32px;height:18px;border:1px solid #4d5d72;border-radius:3px;background:linear-gradient(#c6d8ec 0%,#bcd0e6 40%,#98b2cd 42%,#a8c0da 80%,#bcd2ea 100%);box-shadow:inset 0 0 0 1px rgba(255,255,255,0.65)"></div>
<div class="a" style="left:1049px;top:10px;width:32px;height:18px;border:1px solid #4d5d72;border-radius:3px;background:linear-gradient(#c6d8ec 0%,#bcd0e6 40%,#98b2cd 42%,#a8c0da 80%,#bcd2ea 100%);box-shadow:inset 0 0 0 1px rgba(255,255,255,0.65)"></div>
<div class="a" style="left:1025px;top:18px;width:11px;height:5px;border:1px solid #303848;border-radius:1.5px;background:#f2f2f2"></div>
<div class="a" style="left:1060px;top:14px;width:11px;height:10px;border:1px solid #303848;border-radius:1.5px;background:#f2f2f2"></div>
<div class="a" style="left:1062.5px;top:16.5px;width:6px;height:5px;border:1px solid #303848;background:#9ab2cc"></div>
<div class="a" style="left:1083px;top:10px;width:32px;height:18px;border:1px solid #4a0e14;border-radius:3px;background:linear-gradient(#eab0a0 0%,#e29c8a 45%,#c03c1c 47%,#cc5634 75%,#d8806a 100%);box-shadow:inset 0 0 0 1px rgba(255,220,210,0.7)"></div>
<svg class="a" style="left:1091px;top:12px" width="16" height="14">
<path d="M3.5,3 L12.5,10.5 M12.5,3 L3.5,10.5" stroke="#3a3a4a" stroke-width="4" stroke-linecap="round"/>
<path d="M3.5,3 L12.5,10.5 M12.5,3 L3.5,10.5" stroke="#fafafa" stroke-width="2.2" stroke-linecap="round"/>
</svg>
<svg class="a" style="left:18px;top:37px" width="16" height="14">
<rect x="3.5" y="3" width="1.3" height="8" fill="#1a3a5a"/>
<path d="M12.5,3 L5.5,7 L12.5,11 Z" fill="#3a4a58"/>
</svg>
<svg class="a" style="left:1097px;top:37px" width="14" height="14">
<path d="M3,3 L9.5,7 L3,11 Z" fill="#3a4a58"/>
<rect x="10" y="3" width="1.3" height="8" fill="#1a3a5a"/>
</svg>
<svg class="a" style="left:1095px;top:55px" width="15" height="18">
<path d="M3.2,8.3 C3.6,5 6,3.6 9,3.8" stroke="#129a12" stroke-width="2.6" fill="none"/>
<path d="M7.5,1.8 L12.8,1.8 L12.8,7.6 Z" fill="#129a12"/>
<path d="M12.6,10.2 C12.2,13.5 9.8,15 6.8,14.8" stroke="#129a12" stroke-width="2.6" fill="none"/>
<path d="M8.3,16.2 L3,16.2 L3,10.4 Z" fill="#129a12"/>
</svg>

<div class="badge" style="left:42.0px;top:39.9px">1</div>
<div class="badge" style="left:23.2px;top:170.8px">2</div>
<div class="badge" style="left:23.9px;top:368.9px">3</div>
<div class="badge" style="left:1035.9px;top:118.9px">4</div>
<div class="badge" style="left:926.0px;top:80.5px">5</div>
<div class="badge" style="left:928.3px;top:176.1px">6</div>
<div class="badge" style="left:284.0px;top:624.0px">7</div>
<div class="badge" style="left:986.9px;top:375.0px">8</div>
<div class="badge" style="left:465.0px;top:625.9px">9</div>
<div class="badge" style="left:685.0px;top:403.0px">10</div>
</body></html>
